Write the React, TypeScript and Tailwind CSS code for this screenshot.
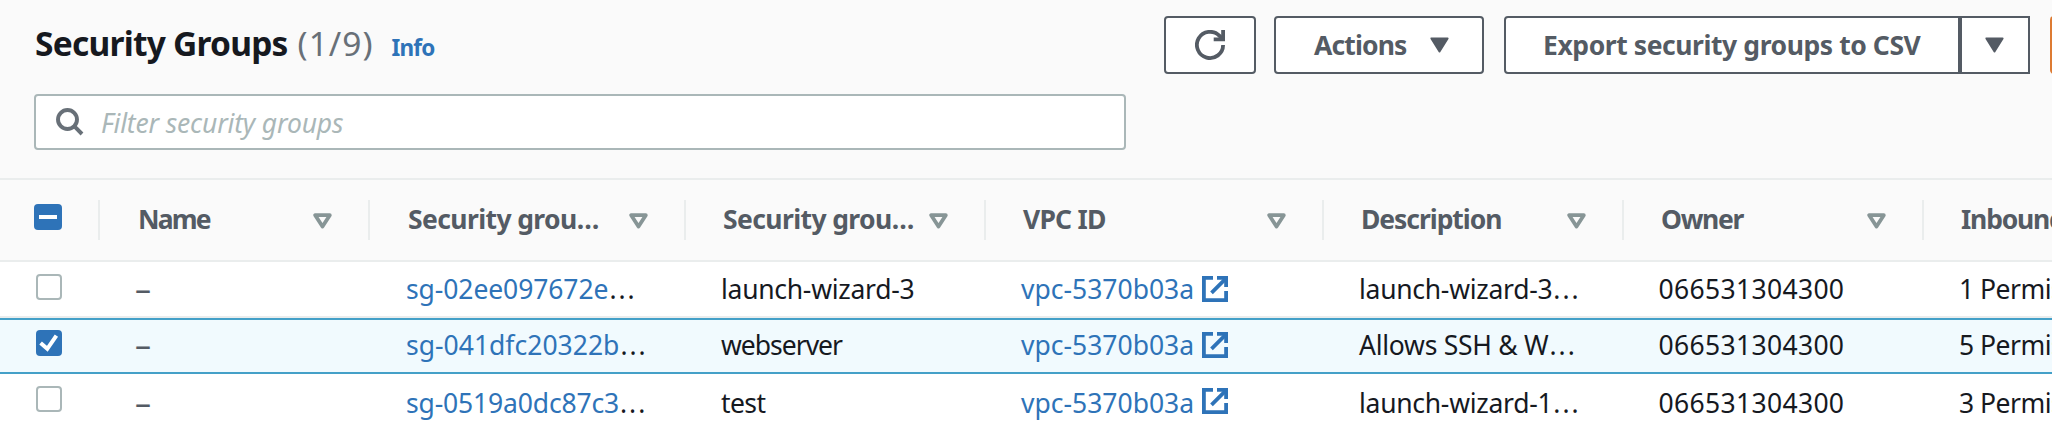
import type { ReactNode } from 'react';

function Triangle() {
  return (
    <svg className="block h-4 w-[19px] shrink-0" viewBox="0 0 19 16">
      <path d="M1.4 1.4H17.6L9.5 14.4Z" fill="#545b64" stroke="#545b64" strokeWidth="2" strokeLinejoin="round" />
    </svg>
  );
}

function SortIcon() {
  return (
    <svg className="mt-0.5 block h-4 w-[19px] shrink-0" viewBox="0 0 19 16">
      <path d="M2.2 2.2H16.8L9.5 13.6Z" fill="none" stroke="#879596" strokeWidth="3.8" strokeLinejoin="round" />
    </svg>
  );
}

function RefreshIcon() {
  return (
    <svg className="block size-[30px]" viewBox="0 0 30 30" fill="none" stroke="#545b64" strokeWidth="3.8">
      <path d="M28.1 15A13.1 13.1 0 1 1 24.3 5.7L27.5 8.9" />
      <path d="M28.1 0V9.4H18.7" />
    </svg>
  );
}

function SearchIcon() {
  return (
    <svg className="block size-7 shrink-0" viewBox="0 0 28 28" fill="none" stroke="#687078" strokeWidth="3.9">
      <circle cx="11.5" cy="11.5" r="9.5" />
      <path d="M18.2 18.2L26 26" />
    </svg>
  );
}

function ExternalIcon() {
  return (
    <svg className="block size-[26px] shrink-0" viewBox="0 0 26 26" fill="none" stroke="#2e73b8" strokeWidth="3.8">
      <path d="M11 1.9H1.9V24.1H24.1V15" />
      <path d="M15 1.9H24.1V11" />
      <path d="M9.5 16.8L23.5 2.8" />
    </svg>
  );
}

function Checkbox({ checked }: { checked?: boolean }) {
  if (!checked) return <div className="size-[26px] rounded-[4px] border-2 border-[#aab7b8] bg-white" />;
  return (
    <div className="size-[26px] rounded-[4px] bg-[#2e73b8]">
      <svg className="block size-[26px]" viewBox="0 0 26 26" fill="none" stroke="#fff" strokeWidth="4">
        <path d="M4.6 13L11.3 18.8L20.4 5.6" />
      </svg>
    </div>
  );
}

const grid =
  'grid grid-cols-[100px_270px_316px_300px_338px_300px_300px_300px]';

const headers = [
  { label: 'Name', tracking: 'tracking-[-1.8px]', pad: 'pl-[38px]' },
  { label: 'Security grou…', tracking: 'tracking-[-0.6px]', pad: 'pl-[38px]' },
  { label: 'Security grou…', tracking: 'tracking-[-0.6px]', pad: 'pl-[37px]' },
  { label: 'VPC ID', tracking: 'tracking-[-0.8px]', pad: 'pl-[37px]' },
  { label: 'Description', tracking: 'tracking-[-1.05px]', pad: 'pl-[37px]' },
  { label: 'Owner', tracking: 'tracking-[-1.3px]', pad: 'pl-[37px]' },
  { label: 'Inbound rules count', tracking: 'tracking-[-1.2px]', pad: 'pl-[37px]' },
];

type Row = {
  id: string;
  idTracking: string;
  name: string;
  nameTracking: string;
  description: string;
  descriptionTracking: string;
  inbound: string;
  selected?: boolean;
  box: string;
  text: string;
  icon: string;
};

const rows: Row[] = [
  {
    id: 'sg-02ee097672e', idTracking: 'tracking-[-0.09px]',
    name: 'launch-wizard-3', nameTracking: 'tracking-[-0.28px]',
    description: 'launch-wizard-3', descriptionTracking: 'tracking-[-0.28px]',
    inbound: '1 Permission entries',
    box: 'h-[56px] border-b-2 border-[#eaeded] bg-white', text: 'pt-[9px]', icon: 'mt-[5px]',
  },
  {
    id: 'sg-041dfc20322b', idTracking: 'tracking-[0.01px]',
    name: 'webserver', nameTracking: 'tracking-[-1px]',
    description: 'Allows SSH & W', descriptionTracking: 'tracking-[-0.26px]',
    inbound: '5 Permission entries', selected: true,
    box: 'h-[56px] border-y-2 border-[#44a0c8] bg-[#f1fafe]', text: 'pt-[7px]', icon: 'mt-[5px]',
  },
  {
    id: 'sg-0519a0dc87c3', idTracking: 'tracking-[-0.16px]',
    name: 'test', nameTracking: 'tracking-[-0.6px]',
    description: 'launch-wizard-1', descriptionTracking: 'tracking-[-0.28px]',
    inbound: '3 Permission entries',
    box: 'h-[56px] bg-white', text: 'pt-[11px]', icon: 'mt-[3px]',
  },
];

function Dots() {
  return <span className="ml-px tracking-[2px]">...</span>;
}

function Cell({ pad, left = 'pl-9', children }: { pad: string; left?: string; children: ReactNode }) {
  return <div className={`flex items-start whitespace-nowrap ${left} ${pad}`}>{children}</div>;
}

function TableRow({ row }: { row: Row }) {
  return (
    <div className={`${grid} ${row.box}`}>
      <div className={`pl-9 ${row.selected ? 'pt-2.5' : 'pt-3'}`}>
        <Checkbox checked={row.selected} />
      </div>
      <Cell pad={row.text} left="pl-[35px]">
        <span className="text-[32px] text-[#545b64]">–</span>
      </Cell>
      <Cell pad={row.text}>
        <span className={`text-[#2e73b8] ${row.idTracking}`}>{row.id}</span>
        <Dots />
      </Cell>
      <Cell pad={row.text} left="pl-[35px]">
        <span className={row.nameTracking}>{row.name}</span>
      </Cell>
      <Cell pad={row.text} left="pl-[35px]">
        <span className="w-[181px] text-[#2e73b8]">vpc-5370b03a</span>
        <div className={row.icon}>
          <ExternalIcon />
        </div>
      </Cell>
      <Cell pad={row.text} left="pl-[35px]">
        <span className={row.descriptionTracking}>{row.description}</span>
        <Dots />
      </Cell>
      <Cell pad={row.text} left="pl-[34.5px]">
        <span className="tracking-[0.33px]">066531304300</span>
      </Cell>
      <Cell pad={row.text} left="pl-[35px]">
        <span className="tracking-[-0.5px]">{row.inbound}</span>
      </Cell>
    </div>
  );
}

export default function App() {
  return (
    <div className="h-[424px] w-[2052px] overflow-hidden bg-[#fafafa] font-['Noto_Sans',sans-serif] text-[26.5px] leading-9 text-[#16191f]">
      <header className="flex h-[94px] pt-4 pl-[34px]">
        <div className="flex w-[1130px] shrink-0 items-baseline pt-px pl-px whitespace-nowrap">
          <h1 className="text-[33.5px] leading-[52px] font-bold tracking-[-0.77px]">Security Groups</h1>
          <span className="ml-2.5 text-[33.5px] tracking-[1px] text-[#687078]">(1/9)</span>
          <a className="ml-[18px] text-[22.5px] font-bold tracking-[-0.8px] text-[#2e73b8]">Info</a>
        </div>
        <div className="flex h-[58px] shrink-0 font-bold whitespace-nowrap text-[#545b64]">
          <button className="flex w-[92px] items-center justify-center rounded-[4px] border-2 border-[#545b64] bg-white">
            <RefreshIcon />
          </button>
          <button className="ml-[18px] flex w-[210px] items-center rounded-[4px] border-2 border-[#545b64] bg-white pl-[38px]">
            <span className="w-[116px] text-left tracking-[-0.87px]">Actions</span>
            <Triangle />
          </button>
          <button className="ml-5 flex w-[456px] items-center rounded-l-[4px] border-2 border-[#545b64] bg-white pl-[37px]">
            <span className="tracking-[-0.42px]">Export security groups to CSV</span>
          </button>
          <button className="flex w-[70px] items-center border-2 border-[#545b64] bg-white pl-[23px]">
            <Triangle />
          </button>
          <div className="ml-5 w-10 rounded-[4px] bg-[#dd7b33]" />
        </div>
      </header>
      <div className="h-[84px] pl-[34px]">
        <div className="flex h-14 w-[1092px] items-center rounded-[4px] border-2 border-[#aab7b8] bg-white pl-5">
          <SearchIcon />
          <span className="ml-[17px] pt-px tracking-[-0.15px] text-[#aab7b8] italic">Filter security groups</span>
        </div>
      </div>
      <div className={`${grid} h-[84px] border-y-2 border-[#eaeded]`}>
        <div className="flex items-start pt-6 pl-[34px]">
          <div className="flex h-[26px] w-7 items-center justify-center rounded-[4px] bg-[#2e73b8]">
            <div className="h-1 w-[18px] bg-white" />
          </div>
          <div className="-mt-1 ml-9 h-10 w-0.5 bg-[#eaeded]" />
        </div>
        {headers.map((h, i) => (
          <div key={i} className={`mt-5 flex h-10 items-center border-r-2 border-[#eaeded] pr-9 whitespace-nowrap ${h.pad}`}>
            <span className={`min-w-0 flex-1 pb-0.5 font-bold text-[#545b64] ${h.tracking}`}>{h.label}</span>
            <SortIcon />
          </div>
        ))}
      </div>
      {rows.map((row) => (
        <TableRow key={row.id} row={row} />
      ))}
    </div>
  );
}
